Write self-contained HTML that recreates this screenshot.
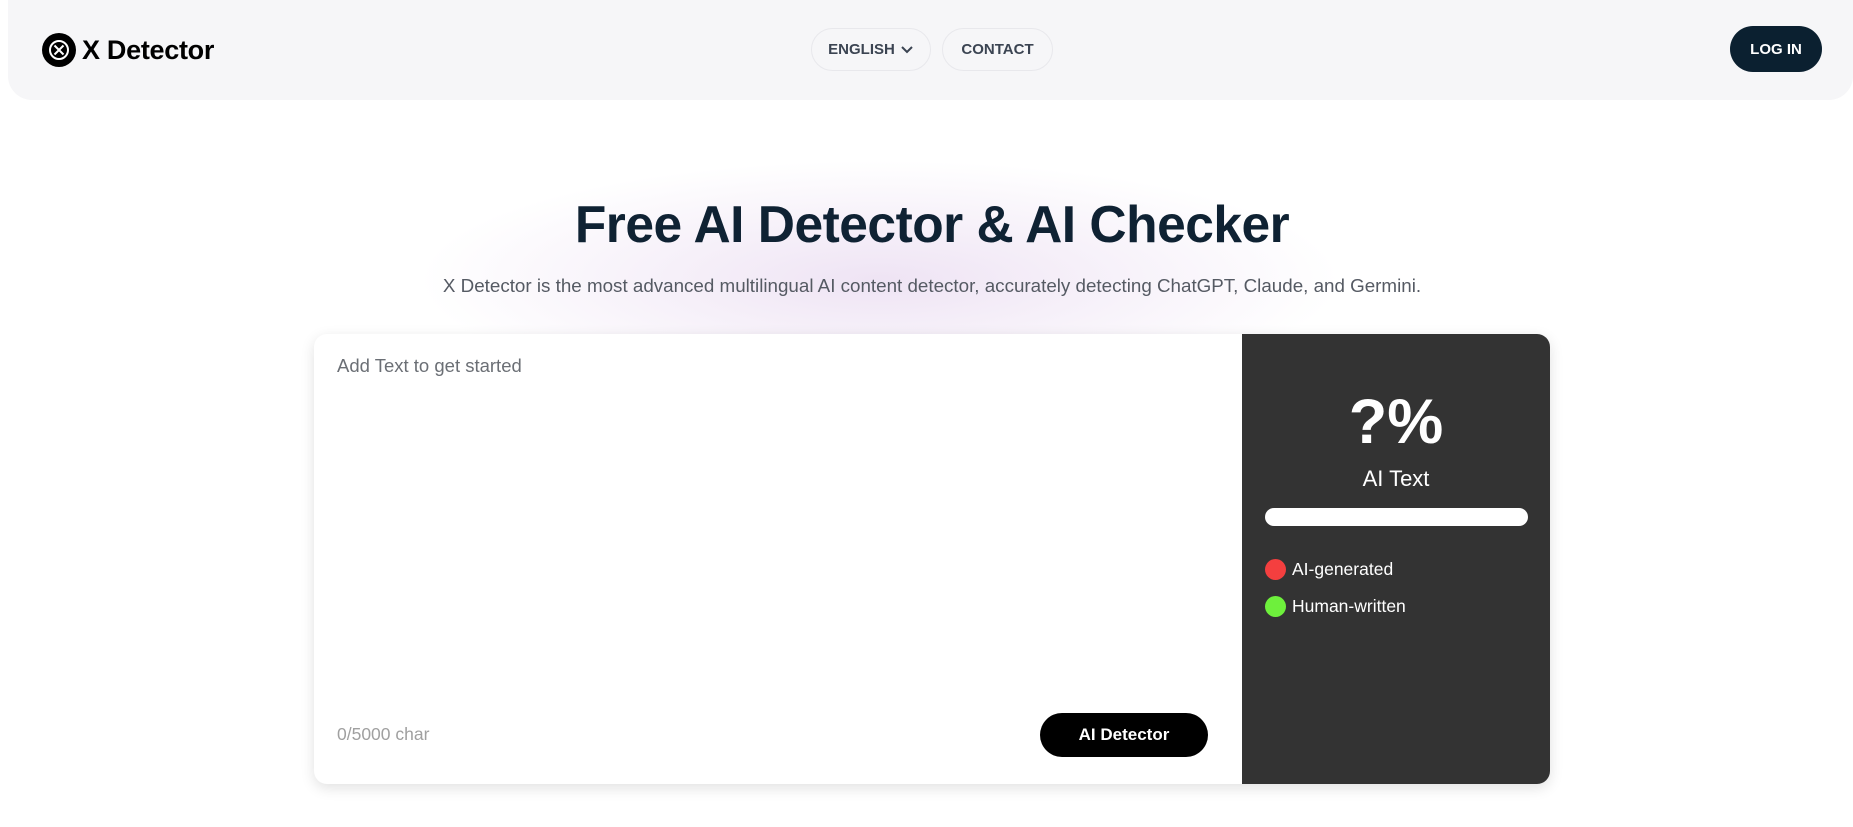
<!DOCTYPE html>
<html><head><meta charset="utf-8"><style>
*{box-sizing:border-box;margin:0;padding:0}
body{width:1853px;height:827px;background:#fff;font-family:"Liberation Sans",sans-serif;position:relative;overflow:hidden}
.hdr{position:absolute;left:8px;top:0;width:1845px;height:100px;background:#f6f6f8;border-radius:0 0 24px 24px}
.logo{position:absolute;left:42px;top:33px;display:flex;align-items:center;gap:6px;font-weight:bold;font-size:27px;color:#000;letter-spacing:-0.3px}
.pill{position:absolute;top:28px;height:43px;border:1px solid #e8e8ec;border-radius:22px;font-size:15px;font-weight:bold;color:#3b4452;display:flex;align-items:center;justify-content:center}
.login{position:absolute;left:1730px;top:26px;width:92px;height:46px;border-radius:23px;background:#0b2030;color:#fff;font-weight:bold;font-size:15px;display:flex;align-items:center;justify-content:center}
.glow{position:absolute;left:380px;top:150px;width:1000px;height:260px;background:radial-gradient(ellipse at center,rgba(225,205,235,.55),rgba(255,255,255,0) 65%)}
h1{position:absolute;left:0;width:1864px;top:194px;text-align:center;font-size:51.5px;color:#0f2233;font-weight:bold;letter-spacing:-0.5px}
.sub{position:absolute;left:0;width:1864px;top:275px;text-align:center;font-size:18.8px;color:#555a63}
.card{position:absolute;left:314px;top:334px;width:1236px;height:450px;border-radius:13px;background:#fff;box-shadow:0 4px 14px rgba(0,0,0,.12);overflow:hidden}
.dark{position:absolute;left:928px;top:0;width:308px;height:450px;background:#333}
.ph{position:absolute;left:23px;top:21px;font-size:18.5px;color:#6b6f75}
.cnt{position:absolute;left:23px;top:390px;font-size:17.5px;color:#a0a0a0}
.btn{position:absolute;left:726px;top:379px;width:168px;height:44px;border-radius:22px;background:#000;color:#fff;font-weight:bold;font-size:17px;display:flex;align-items:center;justify-content:center}
.pct{position:absolute;left:0;width:308px;top:52px;text-align:center;color:#fff;font-weight:bold;font-size:63px}
.ait{position:absolute;left:0;width:308px;top:132px;text-align:center;color:#fff;font-size:22px}
.bar{position:absolute;left:23px;top:174px;width:263px;height:18px;border-radius:9px;background:#fff}
.leg{position:absolute;left:23px;display:flex;align-items:center;gap:6px;color:#fff;font-size:17.5px}
.dot{width:21px;height:21px;border-radius:50%}
</style></head><body>
<div class="hdr"></div>
<div class="logo"><svg width="34" height="34" viewBox="0 0 34 34"><circle cx="17" cy="17" r="17" fill="#000"/><circle cx="17" cy="17" r="9" fill="none" stroke="#fff" stroke-width="2"/><path d="M12.5 12.5L21.5 21.5M21.5 12.5L12.5 21.5" stroke="#fff" stroke-width="2"/></svg>X Detector</div>
<div class="pill" style="left:811px;width:120px">ENGLISH <svg width="14" height="10" viewBox="0 0 14 10" style="margin-left:5px"><path d="M2 2l5 5 5-5" stroke="#3b4452" stroke-width="2" fill="none"/></svg></div>
<div class="pill" style="left:942px;width:111px">CONTACT</div>
<div class="login">LOG IN</div>
<div class="glow"></div>
<h1>Free AI Detector &amp; AI Checker</h1>
<div class="sub">X Detector is the most advanced multilingual AI content detector, accurately detecting ChatGPT, Claude, and Germini.</div>
<div class="card">
<div class="ph">Add Text to get started</div>
<div class="cnt">0/5000 char</div>
<div class="btn">AI Detector</div>
<div class="dark">
<div class="pct">?%</div>
<div class="ait">AI Text</div>
<div class="bar"></div>
<div class="leg" style="top:225px"><div class="dot" style="background:#f43f3f"></div>AI-generated</div>
<div class="leg" style="top:262px"><div class="dot" style="background:#6ef03c"></div>Human-written</div>
</div>
</div>
</body></html>
